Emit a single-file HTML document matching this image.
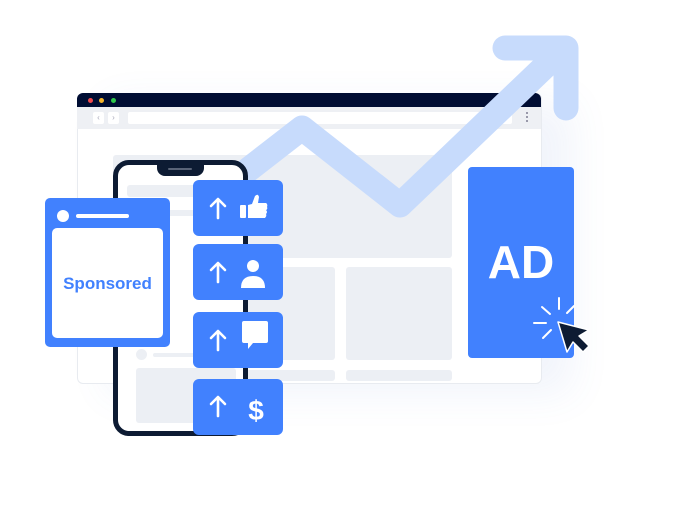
<!DOCTYPE html>
<html><head><style>
body{margin:0;width:680px;height:507px;background:#fff;overflow:hidden;position:relative;font-family:"Liberation Sans",sans-serif}
.a{position:absolute}
.g{position:absolute;background:#eceff4;border-radius:3px}
.btn{position:absolute;left:193px;width:90px;height:56px;background:#4181fe;border-radius:6px}
</style></head><body>
<div class="a" style="left:77px;top:93px;width:463px;height:289px;border:1px solid #e8ebf0;border-radius:6px;background:#fff;box-shadow:30px 10px 40px rgba(80,110,200,0.08)"></div>
<div class="a" style="left:77px;top:93px;width:464px;height:14px;background:#000d33;border-radius:6px 6px 0 0"></div>
<div class="a" style="left:88px;top:98px;width:5px;height:5px;border-radius:50%;background:#f0494c"></div>
<div class="a" style="left:99px;top:98px;width:5px;height:5px;border-radius:50%;background:#f5b52a"></div>
<div class="a" style="left:111px;top:98px;width:5px;height:5px;border-radius:50%;background:#2fc84a"></div>
<div class="a" style="left:77px;top:107px;width:464px;height:22px;background:#eef0f4"></div>
<div class="a" style="left:93px;top:112px;width:11px;height:12px;background:#fff;border-radius:2px;font-size:8px;color:#aab;text-align:center;line-height:12px">‹</div>
<div class="a" style="left:108px;top:112px;width:11px;height:12px;background:#fff;border-radius:2px;font-size:8px;color:#aab;text-align:center;line-height:12px">›</div>
<div class="a" style="left:128px;top:112px;width:384px;height:12px;background:#fff;border-radius:2px"></div>
<div class="a" style="left:526px;top:112px;width:2px;height:10px;background:repeating-linear-gradient(#99a 0 2px,transparent 2px 4px)"></div>
<div class="g" style="left:113px;top:155px;width:339px;height:103px"></div>
<div class="g" style="left:113px;top:267px;width:222px;height:93px"></div>
<div class="g" style="left:346px;top:267px;width:106px;height:93px"></div>
<div class="g" style="left:113px;top:370px;width:222px;height:11px"></div>
<div class="g" style="left:346px;top:370px;width:106px;height:11px"></div>
<svg class="a" style="left:0;top:0" width="680" height="507"><g fill="none" stroke="#c7dbfc" stroke-width="25" stroke-linecap="round" stroke-linejoin="round"><polyline points="235,180 302,128 400,205 562,50"/><polyline points="505,48 566,48 566,108"/></g></svg>
<div class="a" style="left:113px;top:160px;width:125px;height:266px;border:5px solid #0d1b33;border-radius:16px;background:#fff"></div>
<div class="a" style="left:157px;top:163px;width:47px;height:13px;background:#0d1b33;border-radius:0 0 8px 8px"></div>
<div class="a" style="left:168px;top:168px;width:24px;height:2px;background:#5a6478;border-radius:1px"></div>
<div class="g" style="left:127px;top:185px;width:110px;height:12px"></div>
<div class="g" style="left:134px;top:210px;width:70px;height:6px"></div>
<div class="a" style="left:136px;top:349px;width:11px;height:11px;border-radius:50%;background:#eceff4"></div>
<div class="g" style="left:153px;top:353px;width:60px;height:4px"></div>
<div class="g" style="left:136px;top:368px;width:100px;height:55px"></div>
<div class="a" style="left:45px;top:198px;width:125px;height:149px;background:#4181fe;border-radius:5px"></div>
<div class="a" style="left:57px;top:210px;width:12px;height:12px;border-radius:50%;background:#fff"></div>
<div class="a" style="left:76px;top:214px;width:53px;height:4px;border-radius:2px;background:#fff"></div>
<div class="a" style="left:52px;top:228px;width:111px;height:110px;background:#fff;border-radius:5px;color:#4181fe;font-weight:bold;font-size:17px;text-align:center;line-height:112px">Sponsored</div>
<div class="btn" style="top:180px"></div>
<div class="btn" style="top:244px"></div>
<div class="btn" style="top:312px"></div>
<div class="btn" style="top:379px"></div>
<svg class="a" style="left:0;top:0" width="680" height="507"><g stroke="#fff" stroke-width="2.6" fill="none" stroke-linecap="round" stroke-linejoin="round">
<path d="M218,218V200M211,206L218,199L225,206"/>
<path d="M218,282V264M211,270L218,263L225,270"/>
<path d="M218,350V332M211,338L218,331L225,338"/>
<path d="M218,416V398M211,404L218,397L225,404"/></g>
<g fill="#fff">
<rect x="240" y="205" width="6" height="13" rx="1"/>
<path d="M248,205L252,204L255,196Q258,193 259,197L258,203L266,203Q268,204 267,207Q268,209 266,210Q268,212 266,214Q267,216 265,218L248,218Z"/>
<circle cx="253" cy="266" r="6"/>
<path d="M241,288Q241,276 253,276Q265,276 265,288Z"/>
<path d="M244,321H266Q268,321 268,323V341Q268,343 266,343H253L248,349V343H244Q242,343 242,341V323Q242,321 244,321Z"/>
<text x="256" y="420" font-size="28" font-weight="bold" font-family="Liberation Sans" text-anchor="middle">$</text>
</g></svg>
<div class="a" style="left:468px;top:167px;width:106px;height:191px;background:#4181fe;border-radius:4px;color:#fff;font-weight:bold;font-size:46px;text-align:center;line-height:190px">AD</div>
<svg class="a" style="left:0;top:0" width="680" height="507"><g stroke="#fff" stroke-width="2" stroke-linecap="round"><path d="M559,298V309M542,307L550,314M534,323H546M543,338L551,330M567,313L574,306"/></g>
<path d="M558,322L567,352L573,342L583,352L589,346L579,336L589,330Z" fill="#0d1b33" stroke="#fff" stroke-width="1.5" stroke-linejoin="round"/></svg>
</body></html>
